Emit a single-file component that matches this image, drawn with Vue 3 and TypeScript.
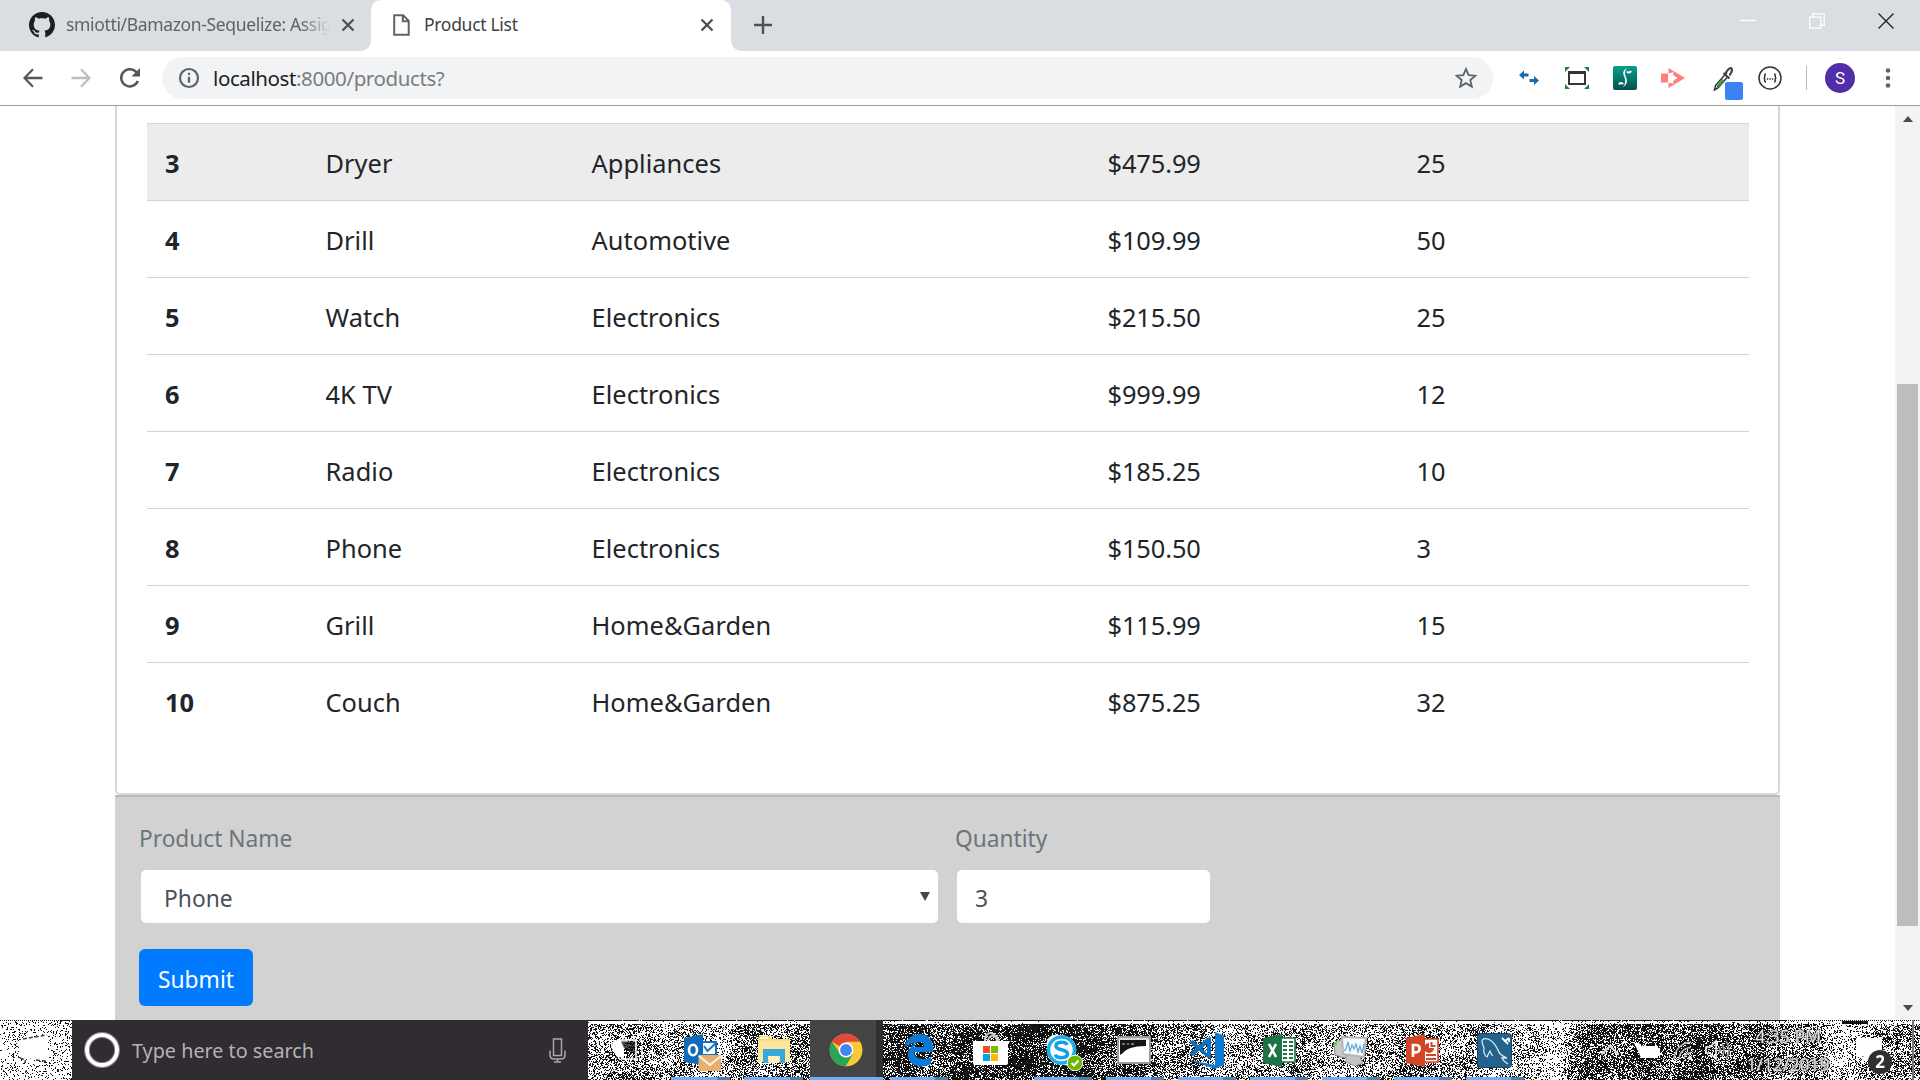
<script setup lang="ts">
import { onMounted, ref } from 'vue'

interface Product {
  id: number
  name: string
  department: string
  price: string
  stock: number
}

const products: Product[] = [
  { id: 3, name: 'Dryer', department: 'Appliances', price: '$475.99', stock: 25 },
  { id: 4, name: 'Drill', department: 'Automotive', price: '$109.99', stock: 50 },
  { id: 5, name: 'Watch', department: 'Electronics', price: '$215.50', stock: 25 },
  { id: 6, name: '4K TV', department: 'Electronics', price: '$999.99', stock: 12 },
  { id: 7, name: 'Radio', department: 'Electronics', price: '$185.25', stock: 10 },
  { id: 8, name: 'Phone', department: 'Electronics', price: '$150.50', stock: 3 },
  { id: 9, name: 'Grill', department: 'Home&Garden', price: '$115.99', stock: 15 },
  { id: 10, name: 'Couch', department: 'Home&Garden', price: '$875.25', stock: 32 },
]

const hovered = 3
const grain = ref<HTMLCanvasElement | null>(null)

// Share of dark pixels along the taskbar: [x, density]
const density: [number, number][] = [
  [0, 0.14], [72, 0.18], [588, 0.4], [640, 0.5], [690, 0.35], [720, 0.3], [750, 0.55], [800, 0.5],
  [883, 0.78], [960, 0.72], [1050, 0.84], [1120, 0.72], [1180, 0.5], [1240, 0.36], [1300, 0.45],
  [1360, 0.34], [1400, 0.55], [1460, 0.42], [1520, 0.3], [1550, 0.2], [1568, 0.4], [1590, 0.66],
  [1700, 0.7], [1780, 0.58], [1830, 0.3], [1870, 0.3], [1900, 0.55], [1920, 0.4],
]

function densityAt(x: number): number {
  for (let i = 1; i < density.length; i++) {
    const [x1, d1] = density[i]
    if (x <= x1) {
      const [x0, d0] = density[i - 1]
      return d0 + ((d1 - d0) * (x - x0)) / (x1 - x0)
    }
  }
  return 0.4
}

onMounted(() => {
  const canvas = grain.value
  const ctx = canvas?.getContext('2d')
  if (!canvas || !ctx) return
  const img = ctx.createImageData(1920, 60)
  let seed = 7919
  const rand = () => {
    seed = (seed * 1664525 + 1013904223) >>> 0
    return seed / 4294967296
  }
  for (let y = 0; y < 60; y++) {
    for (let x = 0; x < 1920; x++) {
      const wave = x > 588 ? Math.sin(x / 13 + y / 9) * Math.cos(y / 11 - x / 29) * 0.14 : 0
      let dark = rand() < densityAt(x) + wave
      if (y === 0) dark = x < 1786 && x > 60 ? rand() > 0.02 : x % 2 === 0
      else if (y < 4 && x > 588) dark = rand() < (x > 1550 ? 0.12 : 0.02)
      if (y > 0 && y < 4 && x >= 1842 && x < 1868) dark = true
      const v = dark ? (rand() < 0.2 ? 38 : 14) : 255
      const o = (y * 1920 + x) * 4
      img.data[o] = v
      img.data[o + 1] = v
      img.data[o + 2] = v
      img.data[o + 3] = 255
    }
  }
  ctx.putImageData(img, 0, 0)
})
</script>

<template>
  <div class="screen">
    <header class="tabs">
      <div class="tab tab-idle">
        <svg class="gh" width="26" height="26" viewBox="0 0 16 16"><path fill="#1b1f23" d="M8 0C3.58 0 0 3.58 0 8c0 3.54 2.29 6.53 5.47 7.59.4.07.55-.17.55-.38 0-.19-.01-.82-.01-1.49-2.01.37-2.53-.49-2.69-.94-.09-.23-.48-.94-.82-1.13-.28-.15-.68-.52-.01-.53.63-.01 1.08.58 1.23.82.72 1.21 1.87.87 2.33.66.07-.52.28-.87.51-1.07-1.78-.2-3.64-.89-3.64-3.95 0-.87.31-1.59.82-2.15-.08-.2-.36-1.02.08-2.12 0 0 .67-.21 2.2.82.64-.18 1.32-.27 2-.27s1.36.09 2 .27c1.53-1.04 2.2-.82 2.2-.82.44 1.1.16 1.92.08 2.12.51.56.82 1.27.82 2.15 0 3.07-1.87 3.75-3.65 3.95.29.25.54.73.54 1.48 0 1.07-.01 1.93-.01 2.2 0 .21.15.46.55.38A8.01 8.01 0 0 0 16 8c0-4.42-3.58-8-8-8z" /></svg>
        <span class="tab-title idle-title">smiotti/Bamazon-Sequelize: Assig</span>
        <svg class="x" width="14" height="14" viewBox="0 0 14 14"><path d="M1.5 1.5l11 11M12.500 1.500l-11 11" stroke="#4d5156" stroke-width="2.300" /></svg>
      </div>
      <div class="tab tab-active">
        <svg class="doc" width="17" height="22" viewBox="0 0 17 22"><path d="M1.200 1.200h9l5.500 5.600v14H1.200zM9.800 1.500v5.700h5.700" fill="none" stroke="#5f6368" stroke-width="2" /></svg>
        <span class="tab-title">Product List</span>
        <svg class="x" width="14" height="14" viewBox="0 0 14 14"><path d="M1.500 1.500l11 11M12.500 1.500l-11 11" stroke="#4d5156" stroke-width="2.300" /></svg>
      </div>
      <svg class="plus" width="18" height="18" viewBox="0 0 18 18"><path d="M9 0v18M0 9h18" stroke="#4d5156" stroke-width="2.400" /></svg>
      <div class="window-buttons">
        <svg width="16" height="16" viewBox="0 0 16 16"><path d="M0 7.500h16" stroke="#fff" stroke-width="1.300" /></svg>
        <svg width="16" height="16" viewBox="0 0 16 16"><path d="M.7 4.200h11v11h-11zM3.700 4V.8h11.500v11.500H12" fill="none" stroke="#fff" stroke-width="1.300" /></svg>
        <svg width="16" height="16" viewBox="0 0 16 16"><path d="M.5.5l15 15M15.500.5l-15 15" stroke="#222" stroke-width="1.400" /></svg>
      </div>
    </header>

    <nav class="toolbar">
      <div class="nav-icons">
        <svg width="20" height="20" viewBox="0 0 20 20"><path d="M19.500 10H1.800M10 1.300L1.500 10l8.500 8.700" fill="none" stroke="#54585d" stroke-width="2.300" /></svg>
        <svg width="20" height="20" viewBox="0 0 20 20"><path d="M.5 10h17.700M10 1.300l8.500 8.700-8.500 8.700" fill="none" stroke="#bcbec2" stroke-width="2.300" /></svg>
        <svg width="22" height="22" viewBox="0 0 22 22"><path d="M18.800 14a8.600 8.600 0 1 1-1.700-9.100l2.500 2.600" fill="none" stroke="#54585d" stroke-width="2.500" /><path d="M21 1v8.500h-8.500z" fill="#54585d" /></svg>
      </div>
      <div class="address">
        <svg width="22" height="22" viewBox="0 0 22 22"><circle cx="11" cy="11" r="9" fill="none" stroke="#5f6368" stroke-width="2.200" /><path d="M11 9.700v6M11 5.800v2.200" stroke="#5f6368" stroke-width="2.300" /></svg>
        <span class="url"><b>localhost</b>:8000/products?</span>
        <svg class="star" width="22" height="22" viewBox="0 0 24 24"><path d="M12 2.200l2.900 6.700 7.300.6-5.500 4.800 1.600 7.100L12 17.600l-6.300 3.800 1.600-7.100-5.500-4.800 7.300-.6z" fill="none" stroke="#5f6368" stroke-width="2" /></svg>
      </div>
      <div class="extensions">
        <svg width="20" height="16" viewBox="0 0 20 16"><path d="M0 5L5 .5v3h4.500v3H5v3zM20 10.500l-5-4.500v3h-4.500v3H15v3z" fill="#1a6aac" /></svg>
        <svg width="24" height="24" viewBox="0 0 24 24"><path d="M0 1h5L0 6zM24 1h-5l5 5zM0 23h5l-5-5zM24 23h-5l5-5z" fill="#2f7d32" /><path d="M4 6h16v12H4z" fill="#fff" stroke="#35363a" stroke-width="2" /><path d="M3.500 6.500h17" stroke="#35363a" stroke-width="3" /></svg>
        <svg width="24" height="24" viewBox="0 0 24 24"><defs><linearGradient id="teal" x2="0" y2="1"><stop stop-color="#08a08e" /><stop offset="1" stop-color="#04504c" /></linearGradient></defs><rect width="24" height="24" rx="2" fill="url(#teal)" /><path d="M14.500 2c-4 1.500-5 4.500-3.500 8 1.500 4 2 7-1 11 3.500-2 4.800-5 3.300-9-1.800-4.500-2-7 1.200-10z" fill="#fff" /><path d="M14 5.500c1 1.500 3 1.500 4-.5M6 18.500c1-2 3-2 4-.2" fill="none" stroke="#fff" stroke-width="2" /></svg>
        <svg width="24" height="20" viewBox="0 0 24 20"><path d="M0 5.500h7v9H0z" fill="#ff7f7f" /><path d="M7.500 0L24 10 7.500 20v-5l4-1 4-4-4-4-4-1z" fill="#ff7f7f" /><path d="M8.500 6l4-1M8.500 14l4 1" stroke="#fff" stroke-width="1.500" /><path d="M14 9.800h2" stroke="#fff" stroke-width="1.800" /></svg>
        <svg class="dropper" width="30" height="34" viewBox="0 0 30 34"><path d="M1.500 24l1-4.500L12 8.500l2.500 2.500-9.500 11z" fill="#fff" stroke="#333" stroke-width="1.500" /><path d="M3.500 20l6.500-7.500 1 4-7 6z" fill="#3f8a3f" /><path d="M10.500 7l6 5.500M13 8c0-3 3-5.500 5-6 1.500.5 1.500 3-1.500 7.500" fill="none" stroke="#444" stroke-width="2.200" /><rect x="12" y="16" width="18" height="18" rx="2" fill="#3b82f6" /></svg>
        <svg width="24" height="24" viewBox="0 0 24 24"><circle cx="12" cy="12" r="11" fill="none" stroke="#333" stroke-width="1.500" /><path d="M8 8c-1.500 0-1.200 1-1.200 2.200 0 1.100-.3 1.800-1.200 1.800.9 0 1.200.7 1.200 1.800C6.800 15 6.500 16 8 16M16 8c1.500 0 1.200 1 1.200 2.200 0 1.100.3 1.800 1.200 1.800-.9 0-1.200.7-1.200 1.800 0 1.200.3 2.200-1.200 2.200" fill="none" stroke="#333" stroke-width="1.500" /><path d="M8.800 13h1.400M11.300 13h1.400M13.800 13h1.400" stroke="#333" stroke-width="1.300" /></svg>
        <i class="divider"></i>
        <span class="avatar">S</span>
        <svg class="dots" width="6" height="20" viewBox="0 0 6 20"><g fill="#5f6368"><circle cx="3" cy="2.500" r="2.300" /><circle cx="3" cy="10" r="2.300" /><circle cx="3" cy="17.500" r="2.300" /></g></svg>
      </div>
    </nav>

    <main class="viewport">
      <div class="page">
        <section class="card">
          <div class="table">
            <div v-for="p in products" :key="p.id" class="row" :class="{ hover: p.id === hovered }">
              <span class="id">{{ p.id }}</span>
              <span>{{ p.name }}</span>
              <span>{{ p.department }}</span>
              <span class="num">{{ p.price }}</span>
              <span class="num">{{ p.stock }}</span>
            </div>
          </div>
        </section>
        <form class="order" @submit.prevent>
          <div class="fields">
            <div class="field name-field">
              <label>Product Name</label>
              <div class="control select"><span>Phone</span><i class="caret"></i></div>
            </div>
            <div class="field qty-field">
              <label>Quantity</label>
              <div class="control input">3</div>
            </div>
          </div>
          <button class="submit" type="submit">Submit</button>
        </form>
      </div>
      <div class="scrollbar">
        <i class="arrow up"></i>
        <i class="thumb"></i>
        <i class="arrow down"></i>
      </div>
    </main>

    <footer class="taskbar">
      <canvas ref="grain" class="grain" width="1920" height="60"></canvas>
      <div class="start">
        <svg width="36" height="32" viewBox="0 0 36 32"><path d="M3 6L32 1v26L3 23z" fill="#fff" /><path d="M7 5L31 1M4 24l5 2v3M20 26l9 1v3" fill="none" stroke="#444" stroke-width="1.500" stroke-dasharray="4 2" /></svg>
      </div>
      <div class="search">
        <i class="cortana"></i>
        <span>Type here to search</span>
        <svg class="mic" width="18" height="25" viewBox="0 0 18 25"><path d="M4.500 1h8v16.500h-8zM1 12.500v4c0 3 1.500 4.500 4 4.500h7c2.500 0 4-1.500 4-4.500v-4M8.500 21v3M5 24h7" fill="none" stroke="#a9a9a9" stroke-width="1.500" /></svg>
      </div>
      <div class="apps">
        <div class="app wide">
          <svg width="34" height="24" viewBox="0 0 34 24"><path d="M3 2l10 1v17L6 19 0 9z" fill="#fff" /><path d="M8 2h17v19H10M31 2v4M31 9v12M28 2h3M28 21h3" fill="none" stroke="#fff" stroke-width="1.500" /><path d="M10 3.500h14v13L13 10z" fill="#111" fill-opacity=".75" /></svg>
        </div>
        <div class="app wide run">
          <svg class="outlook" width="38" height="38" viewBox="0 0 38 38"><path d="M15 8h17v13H15z" fill="#fff" stroke="#1472c4" stroke-width="2" /><path d="M20 12l3.500 5L32 9" fill="none" stroke="#1472c4" stroke-width="2" /><path d="M0 4l19-4v31L0 28z" fill="#0f6cbd" /><ellipse cx="9" cy="16" rx="4" ry="5.300" fill="none" stroke="#fff" stroke-width="2.600" /><path d="M14.500 21H37v16H14.500z" fill="#e8b070" /><path d="M15 22l11 9 11-9" fill="none" stroke="#fff3df" stroke-width="2" /></svg>
        </div>
        <div class="app wide run">
          <svg width="32" height="28" viewBox="0 0 32 28"><path d="M0 2.500Q0 0 2 0h10l2 3h18v23H0z" fill="#f8d775" /><path d="M0 4.500h32V26H0z" fill="#fde69b" /><path d="M5 13h22v14h-5v-7H10v7H5z" fill="#35a9dc" /><path d="M10.500 20h11v7h-11z" fill="#fff3c4" /><path d="M2 2h8" stroke="#fff" stroke-width="1.500" /></svg>
        </div>
        <div class="app wide run active">
          <svg class="chrome" width="34" height="34" viewBox="0 0 48 48"><circle cx="24" cy="24" r="23" fill="#fbc934" /><path d="M24 24L4.100 12.500A23 23 0 0 1 43.900 12.500H24z" fill="#e04a3c" /><path d="M4.100 12.500A23 23 0 0 0 24 47l10-17-18-1z" fill="#2aa457" /><path d="M24 13.500h20.500A23 23 0 0 1 24 47l9.500-17z" fill="#fbc934" /><circle cx="24" cy="24" r="10.500" fill="#fff" /><circle cx="24" cy="24" r="8.300" fill="#4285f4" /></svg>
        </div>
        <div class="app run">
          <svg width="30" height="33" viewBox="0 0 30 33"><path d="M0 14C2 5 8 0 15.500 0 24 0 29 6 29 14v4H10c0 7 10 9 17 5v7c-9 5-23 3-23-10C4 15 8 11 12 9 6 9 2 11 0 14zm10-1h10c0-7-9-7-10 0z" fill="#0a78d4" /></svg>
        </div>
        <div class="app">
          <svg class="store" width="36" height="34" viewBox="0 0 36 34"><path d="M12 10C11-2 23-2 24 10M15 10c0-8 9-9 11 0" fill="none" stroke="#ccc" stroke-width="2" /><path d="M0 9h35v22q0 2-2 2H2q-2 0-2-2z" fill="#fff" /><path d="M10 14h7v7h-7z" fill="#f25022" /><path d="M18 14h7v7h-7z" fill="#7fba00" /><path d="M10 22h7v7h-7z" fill="#00a4ef" /><path d="M18 22h7v7h-7z" fill="#ffb900" /></svg>
        </div>
        <div class="app run">
          <svg class="skype" width="37" height="37" viewBox="0 0 37 37"><circle cx="10" cy="10" r="9.500" fill="#fff" /><circle cx="21" cy="22" r="9.500" fill="#fff" /><circle cx="15.500" cy="16" r="14.700" fill="#fff" /><circle cx="15.500" cy="16" r="13" fill="none" stroke="#19aee8" stroke-width="3.500" /><path d="M21 11c-1-3.500-11-4-11 1 0 5 11.500 2.500 11.500 8 0 5-11.500 4.500-12 .5" fill="none" stroke="#12a0e0" stroke-width="3.600" /><circle cx="29" cy="29" r="7.800" fill="#6bb700" stroke="#fff" /><path d="M25.500 29l2.500 2.500 4.500-5" fill="none" stroke="#fff" stroke-width="2" /></svg>
        </div>
        <div class="app run">
          <svg class="cmd" width="34" height="28" viewBox="0 0 34 28"><path d="M1 1h32v26H1z" fill="#fff" stroke="#9a9aa2" stroke-width="2" /><path d="M2 2h30v2H2z" fill="#d5d5db" /><path d="M3 4h26v6c-13 0-20 3-23 7l-3 2z" fill="#151515" /><path d="M5 8h3M10 8h2M14 8h3" stroke="#ccc" /></svg>
        </div>
        <div class="app run">
          <svg width="36" height="37" viewBox="0 0 36 37"><path d="M0 10l4-2 16 15v4z" fill="#0b70bf" /><path d="M0 22l18-16 4-1v22l-4-2V12L4 24z" fill="#0b70bf" /><path d="M0 28l26 5V0l9 3.500V33l-9 4z" fill="#0f7bd0" /></svg>
        </div>
        <div class="app run">
          <svg width="33" height="33" viewBox="0 0 33 33"><path d="M17 4h15v24H17z" fill="#fff" stroke="#1e7346" stroke-width="1.600" /><path d="M20 8h4M26 8h4M20 12h4M26 12h4M20 16h4M26 16h4M20 20h4M26 20h4M20 24h4M26 24h4" stroke="#1e7346" stroke-width="2" /><path d="M0 4l19-4v33L0 29z" fill="#1e7346" /><path d="M6 10l7 13M13 10L6 23" stroke="#fff" stroke-width="2.600" /></svg>
        </div>
        <div class="app run">
          <svg class="perf" width="34" height="32" viewBox="0 0 34 32"><path d="M1 9l8-4 6 20-13-4z" fill="#c9c9c9" stroke="#888" /><path d="M13 21h13l4 8-8 3-9-4z" fill="#c4c4c4" stroke="#999" /><path d="M9 3l24 1-2 19-21-3z" fill="#f7fafc" stroke="#b5b5b5" stroke-width="2" /><path d="M11 17l2-2 2-7 2 9 2-6 2 4 2-5 2 8 2-6 2 7 2-9" fill="none" stroke="#5fa8d8" stroke-width="1.200" /><path d="M1 9l3-1v3l-3 1z" fill="#6bd24a" /></svg>
        </div>
        <div class="app run">
          <svg class="ppt" width="33" height="33" viewBox="0 0 33 33"><path d="M17 5h15v23H17z" fill="#fff" stroke="#d24625" stroke-width="1.600" /><path d="M23 9a5 5 0 1 0 5 5h-5z" fill="#d24625" /><path d="M25.500 8v4h4M20 21h10M20 25h10" fill="none" stroke="#d24625" stroke-width="2" /><path d="M0 4l19-4v33L0 29z" fill="#d24625" /><path d="M7 23V11h3a3.500 3.500 0 0 1 0 7.300H7" fill="none" stroke="#fff" stroke-width="2.700" /></svg>
        </div>
        <div class="app run">
          <svg class="sql" width="35" height="35" viewBox="0 0 35 35"><rect x=".5" y=".5" width="34" height="34" rx="3" fill="#22628d" stroke="#174562" /><path d="M5 7c6-4 12 2 16 10 1 4 4 6 9 8h-5l2 3 4 3M5 7c0 4 1 5 2 8-1 4 1 8 3 9 1-2 1-3 3-6 1 2 1 4 3 5" fill="none" stroke="#d9e6ee" stroke-width="1.300" /><path d="M25 5l3 3 4-3M28 8l3 3M32 5v4" fill="none" stroke="#fff" stroke-width="1.800" /></svg>
        </div>
      </div>
      <div class="tray">
        <svg class="chev" width="20" height="12" viewBox="0 0 20 12"><path d="M1.500 10.500L10 2l8.500 8.500" fill="none" stroke="#ddd" stroke-width="2" /></svg>
        <svg class="battery" width="26" height="18" viewBox="0 0 26 18"><path d="M0 1h5l2 3h17v2h2v8h-2v2H7l-2-5z" fill="#fff" /></svg>
        <svg class="wifi" width="20" height="22" viewBox="0 0 20 22"><path d="M1 20A18 18 0 0 1 18 3M6 20A12 12 0 0 1 18 8.500M11 20a7 7 0 0 1 7-6.500" fill="none" stroke="#bbb" stroke-width="1.600" /><circle cx="17" cy="19" r="2" fill="#fff" /></svg>
        <svg class="volume" width="26" height="22" viewBox="0 0 26 22"><path d="M1 8h4l6-6v18l-6-6H1z" fill="none" stroke="#fff" stroke-width="1.600" /><path d="M14 8q2 3 0 6M17 5q4 6 0 12M21 2q6 9 0 18" fill="none" stroke="#999" stroke-width="1.600" /></svg>
        <div class="clock"><span>4:35 PM</span><span>1/12/2019</span></div>
        <div class="notify">
          <svg width="28" height="26" viewBox="0 0 28 26"><path d="M1 1h26v19H15l-1 5-4-5-9-2z" fill="#fff" /></svg>
          <b class="badge">2</b>
        </div>
        <i class="peek"></i>
      </div>
    </footer>
  </div>
</template>

<style>
body {
  margin: 0;
  overflow: hidden;
}
</style>

<style scoped>
.screen {
  width: 1920px;
  height: 1080px;
  display: flex;
  flex-direction: column;
  overflow: hidden;
  background: #fff;
  font-family: "Noto Sans", "Open Sans", sans-serif;
  color: #212529;
}
svg { display: block; flex: none; }

/* Tab strip */
.tabs {
  height: 51px;
  flex: none;
  display: flex;
  align-items: center;
  background: #dadde2;
}
.tab {
  height: 51px;
  display: flex;
  align-items: center;
  box-sizing: border-box;
}
.tab-idle { width: 371px; padding: 0 16px 2px 29px; }
.tab-active {
  width: 360px;
  padding: 0 17px 2px 22px;
  background: #fff;
  border-radius: 10px 10px 0 0;
  position: relative;
}
.tab-active::before,
.tab-active::after {
  content: "";
  position: absolute;
  bottom: 0;
  width: 10px;
  height: 10px;
}
.tab-active::before { left: -10px; background: radial-gradient(circle at 0 0, transparent 9.500px, #fff 10px); }
.tab-active::after { right: -10px; background: radial-gradient(circle at 100% 0, transparent 9.500px, #fff 10px); }
.tab-title {
  flex: 1;
  font-size: 17.500px;
  letter-spacing: -0.3px;
  color: #3c4043;
  white-space: nowrap;
  margin-top: -2px;
}
.idle-title {
  margin: -2px 0 0 11px;
  letter-spacing: -0.35px;
  color: #5f6368;
  -webkit-mask-image: linear-gradient(90deg, #000 235px, transparent 264px);
  mask-image: linear-gradient(90deg, #000 235px, transparent 264px);
}
.doc { margin-right: 14px; }
.plus { margin: -2px 0 0 23px; }
.window-buttons {
  margin-left: auto;
  margin-right: 26px;
  margin-top: -9px;
  display: flex;
  gap: 53px;
}

/* Toolbar */
.toolbar {
  height: 55px;
  flex: none;
  box-sizing: border-box;
  display: flex;
  align-items: center;
  border-bottom: 1px solid #9d9d9f;
}
.nav-icons {
  width: 162px;
  box-sizing: border-box;
  padding-left: 23px;
  display: flex;
  align-items: center;
  gap: 28px;
}
.address {
  width: 1331px;
  height: 42px;
  box-sizing: border-box;
  border-radius: 21px;
  background: #f1f3f4;
  display: flex;
  align-items: center;
  padding: 0 16px 0 16px;
}
.url {
  flex: 1;
  margin-left: 13px;
  font-size: 20.500px;
  letter-spacing: -0.4px;
  color: #797d82;
}
.url b { font-weight: 400; color: #202124; }
.extensions { display: flex; align-items: center; margin-left: 26px; }
.extensions > :nth-child(2) { margin-left: 26px; }
.extensions > :nth-child(3) { margin-left: 24px; }
.extensions > :nth-child(4) { margin-left: 24px; }
.extensions > .dropper { margin-left: 28px; margin-top: 10px; }
.extensions > :nth-child(6) { margin-left: 15px; }
.divider { width: 1px; height: 24px; margin-left: 24px; background: #b9bbbe; }
.avatar {
  width: 30px;
  height: 30px;
  margin-left: 18px;
  border-radius: 50%;
  background: #512da8;
  color: #fff;
  text-align: center;
  font: 17px/31px Roboto, sans-serif;
}
.dots { margin-left: 30px; }

/* Page */
.viewport { flex: 1; display: flex; min-height: 0; }
.page { width: 1665px; margin-left: 115px; display: flex; flex-direction: column; }
.card {
  height: 689px;
  flex: none;
  box-sizing: border-box;
  padding: 17px 29px 0 30px;
  border: 2px solid #d5d7d8;
  border-top: 0;
  border-radius: 0 0 5px 5px;
}
.row {
  height: 77px;
  box-sizing: border-box;
  border-top: 1px solid #cfd4d6;
  display: grid;
  grid-template-columns: 160.500px 266px 516px 309px auto;
  align-items: center;
  padding: 3px 0 0 18px;
  font-size: 25.400px;
  line-height: 1.500;
  letter-spacing: 0.05px;
}
.row.hover { background: #ececec; }
.num { letter-spacing: -0.1px; }
.id { font-weight: 700; }
.order {
  flex: 1;
  box-sizing: border-box;
  padding: 23px 0 0 24px;
  background: #d1d2d1;
  border-top: 2px solid #b9bab9;
}
.fields { display: flex; gap: 16px; }
.name-field { width: 800px; }
.qty-field { width: 256px; }
.field label {
  display: block;
  height: 50px;
  font-size: 22.700px;
  line-height: 38px;
  color: #6c757d;
}
.control {
  height: 53px;
  margin: 0 1px 0 2px;
  box-sizing: border-box;
  border-radius: 5px;
  background: #fff;
  display: flex;
  align-items: center;
  padding-top: 3px;
  font-size: 22.800px;
  color: #495057;
}
.select { justify-content: space-between; padding-left: 23px; padding-right: 8px; }
.input { padding-left: 18px; }
.caret {
  margin-top: -4px;
  border: 5px solid transparent;
  border-top: 9px solid #41474b;
  border-bottom: 0;
}
.submit {
  display: block;
  width: 114px;
  height: 57px;
  margin-top: 26px;
  padding: 3px 0 0;
  border: 0;
  border-radius: 6px;
  background: #007bff;
  color: #fff;
  font: 22.800px "Noto Sans", "Open Sans", sans-serif;
}
.scrollbar {
  width: 25px;
  margin-left: auto;
  display: flex;
  flex-direction: column;
  align-items: center;
  background: #f3f3f3;
}
.arrow { border: 5.500px solid transparent; }
.up { margin-top: 10px; border-top: 0; border-bottom: 6px solid #4b4b4b; }
.down { margin-top: auto; margin-bottom: 9px; border-bottom: 0; border-top: 6px solid #4b4b4b; }
.thumb { width: 21px; height: 542px; margin-top: 262px; background: #bdbdbd; }

/* Taskbar */
.taskbar { height: 60px; flex: none; position: relative; display: flex; }
.taskbar > div { position: relative; }
.grain { position: absolute; left: 0; top: 0; }
.start { width: 72px; display: flex; align-items: center; padding-left: 16px; box-sizing: border-box; }
.search {
  width: 516px;
  box-sizing: border-box;
  padding: 0 21px 0 13px;
  display: flex;
  align-items: center;
  background: #302c32;
  color: #b4b2b4;
  font-size: 19.800px;
}
.cortana {
  width: 26px;
  height: 26px;
  margin-right: 13px;
  border: 4px solid #fff;
  border-radius: 50%;
  box-shadow: inset 0 0 0 1px #777, 0 0 0 1px #888;
  box-sizing: content-box;
  margin-top: -1px;
}
.mic { margin-left: auto; }
.apps { display: flex; margin-left: 3px; }
.app {
  width: 72px;
  height: 60px;
  display: flex;
  justify-content: center;
  align-items: center;
  position: relative;
}
.wide { width: 73px; }
.outlook { margin: 5px 0 0 5px; }
.skype { margin: 4px 0 0 3px; }
.chrome { margin-right: 2px; }
.store { margin-top: -3px; }
.cmd { margin-right: 2px; }
.perf, .sql { margin-right: 2px; }
.ppt { margin-right: 2px; }
.run::after {
  content: "";
  position: absolute;
  left: 7px;
  right: 7px;
  bottom: 0;
  height: 3px;
  background: linear-gradient(90deg, #70adf3 78%, #527ba8 78%);
}
.active { background: linear-gradient(90deg, #444 90%, #303030 90%); }
.run.active::after { left: 0; right: 0; background: #70adf3; }
.tray { flex: 1; display: flex; align-items: center; color: #eee; }
.chev { margin-left: 69px; }
.battery { margin-left: 14px; margin-top: 2px; }
.wifi { margin-left: 13px; }
.volume { margin-left: 12px; }
.clock {
  width: 90px;
  margin-left: 12px;
  display: flex;
  flex-direction: column;
  align-items: center;
  font-size: 17.500px;
  line-height: 28px;
  color: #e2e2e2;
  text-shadow: 0 0 2px #222, 0 0 2px #333;
}
.notify { margin-left: 22px; position: relative; width: 28px; height: 26px; }
.badge {
  position: absolute;
  left: 13px;
  top: 13px;
  width: 24px;
  height: 24px;
  border-radius: 50%;
  background: #303030;
  color: #fff;
  text-align: center;
  font-size: 17px;
  line-height: 24px;
}
.peek { width: 2px; height: 60px; margin-left: auto; margin-right: 6px; background: #777; }
</style>
